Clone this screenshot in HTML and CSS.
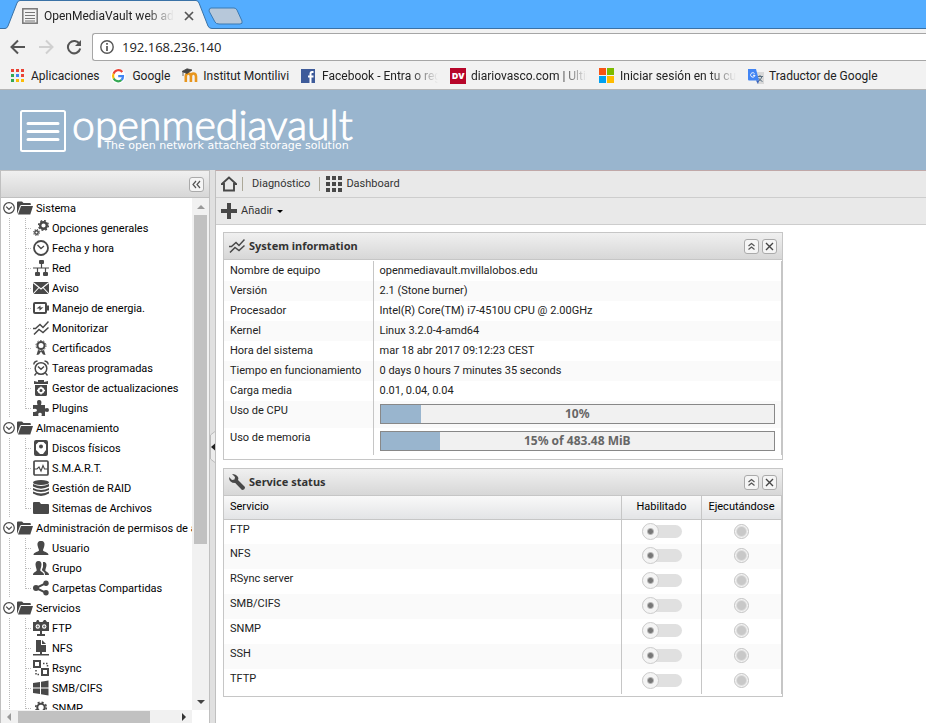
FILE: index.html
```html
<!DOCTYPE html>
<html lang="es">
<head>
<meta charset="utf-8">
<title>OpenMediaVault web administration</title>
<link rel="stylesheet" href="styles.css">
</head>
<body>
<svg class="sprite" aria-hidden="true">
  <symbol id="elbow" viewBox="0 0 32 20"><path d="M9.500 0V20M25.500 0V20M26 10.500H32" fill="none" stroke="#bbb" stroke-dasharray="1 1"/></symbol>
  <symbol id="elbow-end" viewBox="0 0 32 20"><path d="M9.500 0V20M25.500 0V11M26 10.500H32" fill="none" stroke="#bbb" stroke-dasharray="1 1"/></symbol>
  <symbol id="expand" viewBox="0 0 12 12"><circle cx="6" cy="6" r="5.300" fill="#fff" stroke="#484848" stroke-width="1.200"/><path d="M3.200 4.600 6 7.400 8.800 4.600" fill="none" stroke="#484848" stroke-width="1.300"/></symbol>
  <symbol id="folder-open" viewBox="0 0 16 16"><path d="M0 14V2.500Q0 1.500 1 1.500H5L6.500 3H13Q13.800 3 13.800 4V5H4.500Q3.500 5 3 6Z"/><path d="M4 6H16L13.300 14.500H1Z"/></symbol>
  <symbol id="folder" viewBox="0 0 16 16"><path d="M0 4V13Q0 14 1 14H15Q16 14 16 13V5Q16 4 15 4H8L6.500 2H1Q0 2 0 3Z"/></symbol>
  <symbol id="gears" viewBox="0 0 16 16"><circle cx="10.500" cy="5.500" r="3.300" fill="none" stroke="currentColor" stroke-width="2.400"/><circle cx="10.500" cy="5.500" r="4.900" fill="none" stroke="currentColor" stroke-width="1.400" stroke-dasharray="1.900 1.950"/><circle cx="3.500" cy="12.500" r="1.700" fill="none" stroke="currentColor" stroke-width="1.400"/><circle cx="3.500" cy="12.500" r="2.800" fill="none" stroke="currentColor" stroke-width="1.200" stroke-dasharray="1.100 1.100"/></symbol>
  <symbol id="clock" viewBox="0 0 16 16"><circle cx="8" cy="8" r="7" fill="none" stroke="currentColor" stroke-width="1.800"/><path d="M4.500 5 8 8.500 11 6" fill="none" stroke="currentColor" stroke-width="1.300"/></symbol>
  <symbol id="network" viewBox="0 0 16 16"><rect x="6" y="0" width="5" height="4" rx="1"/><rect x="2" y="12" width="5" height="4" rx="1"/><rect x="10" y="12" width="5" height="4" rx="1"/><path d="M8.500 3V8M0 8H16M4.500 8V13M12.500 8V13" fill="none" stroke="currentColor" stroke-width="1.200"/></symbol>
  <symbol id="mail" viewBox="0 0 16 16"><path d="M0 2H16V14H0Z"/><path d="M0 2.500 8 9 16 2.500M0 14 6 7.500M16 14 10 7.500" fill="none" stroke="#fff" stroke-width="1.100"/></symbol>
  <symbol id="battery" viewBox="0 0 16 16"><rect x="1" y="3" width="12" height="10" rx="1" fill="none" stroke="currentColor" stroke-width="2"/><path d="M14 5.500h2v5h-2z"/><path d="M3.500 8.500 7.500 5.500V7.500L10.500 7.300 6.500 10.800V8.500Z"/></symbol>
  <symbol id="chart" viewBox="0 0 16 16"><path d="M0 8.500H2.500L7 4.500 10 7.500 15.500 1.500M1 14.500 6 9.500 10 12.500 15.500 7.500" fill="none" stroke="currentColor" stroke-width="1.500"/></symbol>
  <symbol id="badge" viewBox="0 0 16 16"><circle cx="8" cy="5.500" r="3.500" fill="none" stroke="currentColor" stroke-width="2"/><circle cx="8" cy="5.500" r="5" fill="none" stroke="currentColor" stroke-dasharray="1.600 1.540"/><path d="M5 10 3.500 15 6 14.500 8 11.500 10 14.500 12.500 15 11 10 8 11Z"/></symbol>
  <symbol id="alarm" viewBox="0 0 16 16"><circle cx="8" cy="8.500" r="5.800" fill="none" stroke="currentColor" stroke-width="1.500"/><path d="M5 6.500 8 9.300 11 6.500M.8 4.500Q1 1.500 4.500 1M15.200 4.500Q15 1.500 11.500 1M3.500 13 1.500 15.500M12.500 13 14.500 15.500" fill="none" stroke="currentColor" stroke-width="1.400"/></symbol>
  <symbol id="package" viewBox="0 0 16 16"><path d="M1 1 5 2V0H11V2L15 1V4H1ZM2 5H14V14.500Q14 16 12.500 16H3.500Q2 16 2 14.500Z"/><circle cx="8" cy="10.500" r="2.400" fill="none" stroke="#fff" stroke-width="1.700"/><path d="M8 6.500V8M8 13V14.500M4 10.500H5.500M10.500 10.500H12" stroke="#fff" stroke-width="1.300"/></symbol>
  <symbol id="puzzle" viewBox="0 0 16 16"><path d="M0 5H4.500Q3 0 6 0 9.500 0 8 5H12V8.500Q16 7.200 16 10 16 12.800 12 11.500V16H8.500Q9.500 12.800 7 12.800 4.500 12.800 5.500 16H0V12Q4 12.500 4 10.300 4 8 0 9Z"/></symbol>
  <symbol id="disk" viewBox="0 0 16 16"><rect x="2" y="1" width="12" height="14" rx="1" fill="none" stroke="currentColor" stroke-width="2"/><circle cx="8" cy="6.500" r="2"/><path d="M3 10 7 14H3ZM13 10 10 14H13ZM3 2H5.500L3 4.500ZM13 2H10.500L13 4.500Z"/></symbol>
  <symbol id="smart" viewBox="0 0 16 16"><rect x="1" y="1" width="14" height="14" rx="1" fill="none" stroke="currentColor" stroke-width="1.700"/><path d="M1 9H4L6 7 8 11 10 5.500 11.500 9H15" fill="none" stroke="currentColor" stroke-width="1.100"/></symbol>
  <symbol id="raid" viewBox="0 0 16 16"><ellipse cx="8" cy="2.500" rx="8" ry="2.500"/><path d="M0 4Q8 7.800 16 4V6.500Q8 10.800 0 6.500ZM0 8Q8 12 16 8V10Q8 14 0 10ZM0 11.500Q8 15.300 16 11.500V13.500Q8 18.300 0 13.500Z"/></symbol>
  <symbol id="user" viewBox="0 0 16 16"><path d="M8 1C11 1 12 3 11.300 6 11 8 10 9 10 10.500 11 12 15.500 12 15.500 15H.5C.5 12 5 12 6 10.500 6 9 5 8 4.700 6 4 3 5 1 8 1Z"/></symbol>
  <symbol id="group" viewBox="0 0 16 16"><path d="M5.500 1C8 1 9 3 8.300 6 8 8 7.300 9 7.300 10.500 8 12 11 12 11 15H0C0 12 3 12 3.700 10.500 3.700 9 3 8 2.700 6 2 3 3 1 5.500 1ZM10 2C13 1.500 14 4 13.300 6.500 13 8 12.300 9.500 12.300 10.500 13 12 16 12 16 15H12C12 12.500 11 11.500 9.500 11L9 9.500 10 7Z"/></symbol>
  <symbol id="share" viewBox="0 0 16 16"><circle cx="3" cy="8" r="3"/><circle cx="13" cy="3.200" r="2.700"/><circle cx="13" cy="12.800" r="2.700"/><path d="M13 3.200 3 8 13 12.800" fill="none" stroke="currentColor" stroke-width="2"/></symbol>
  <symbol id="ftp" viewBox="0 0 16 16"><path d="M0 2H3L4 0H5.500L6.500 2H9.500L11 0H12.500L14 2H16V11H0Z"/><path d="M7 11h2v3h-2zM4 14h8v2H4z"/><circle cx="4.800" cy="6.500" r="2.200" fill="#fff"/><circle cx="11.200" cy="6.500" r="2.200" fill="#fff"/><path d="M4.800 5v3M3.500 6.500H6M11.200 5v3M10 6.500H12.500" stroke="currentColor" stroke-width=".6"/></symbol>
  <symbol id="nfs" viewBox="0 0 16 16"><path d="M3 0H8V5H13V12H3Z"/><path d="M9 0 13 4H9ZM7 12h2v2H7zM0 14h16v1.500H0z"/></symbol>
  <symbol id="rsync" viewBox="0 0 16 16"><path d="M1 1h6v6H1zM9 9h6v6H9z" fill="none" stroke="currentColor" stroke-width="2"/><path d="M10 3.500H14.500V7M3 10V14.500H7" fill="none" stroke="currentColor" stroke-width="1.500" stroke-dasharray="1.500 1.500"/></symbol>
  <symbol id="windows" viewBox="0 0 16 16"><path d="M0 3 7 2V7.500H0ZM8 1.800 15.500.5V7.500H8ZM0 8.500H7V14L0 13ZM8 8.500H15.500V15.500L8 14.200Z"/></symbol>
  <symbol id="gear" viewBox="0 0 16 16"><circle cx="8" cy="7.500" r="3.700" fill="none" stroke="currentColor" stroke-width="2"/><circle cx="8" cy="7.500" r="5.300" fill="none" stroke="currentColor" stroke-width="1.600" stroke-dasharray="2.100 2.060"/></symbol>
  <symbol id="wrench" viewBox="0 0 16 16"><path d="M0 3 3 6 5.500 5.500 6 3 3 0Q7 0 9 3 9.800 4.500 9 6L16 13Q16 16 13 16L6.200 9Q0 9 0 3Z"/></symbol>
  <symbol id="up2" viewBox="0 0 13 13"><path d="M3.500 6 6.500 3.500 9.500 6M3.500 9.500 6.500 7 9.500 9.500" fill="none" stroke="#555" stroke-width="1.200"/></symbol>
  <symbol id="left2" viewBox="0 0 13 13"><path d="M6 3 3 6.500 6 10M10 3 7 6.500 10 10" fill="none" stroke="#555" stroke-width="1.200"/></symbol>
  <symbol id="cross" viewBox="0 0 13 13"><path d="M3 3 10 10M10 3 3 10" stroke="#444" stroke-width="1.400"/></symbol>
</svg>

<div class="tabstrip">
  <div class="tab">
    <svg class="tab-shape" viewBox="0 0 246 29" aria-hidden="true">
      <path d="M209 11Q209 8 211 8H234Q236 8 237 10L242 21Q243 24 240 24H219Q216 24 215 22Z" fill="#b7c8da" stroke="#3b7ab3"/>
      <path d="M0 28.500H5Q7 28.500 8 26L17 3Q18 .5 20 .5H196Q198 .5 199 3L208 26Q209 28.500 212 28.500H246V29H0Z" fill="#f2f2f2"/>
      <path d="M0 28.500H5Q7 28.500 8 26L17 3Q18 .5 20 .5H196Q198 .5 199 3L208 26Q209 28.500 212 28.500H246" fill="none" stroke="#3a72a6"/>
    </svg>
    <div class="tab-content">
      <svg width="16" height="16" viewBox="0 0 16 16" aria-hidden="true"><rect x=".8" y=".8" width="14.400" height="14.400" fill="#f2f2f2" stroke="#777" stroke-width="1.500"/><path d="M3 4.500H13M3 7.500H13M3 10.500H13M3 13H13" stroke="#777"/></svg>
      <span class="tab-title fade">OpenMediaVault web adm</span>
      <button class="tab-close" aria-label="Cerrar pestaña"><svg width="10" height="10" viewBox="0 0 10 10"><path d="M1 1 9 9M9 1 1 9" stroke="#555" stroke-width="1.700"/></svg></button>
    </div>
  </div>
</div>

<div class="navbar">
  <button aria-label="Atrás"><svg width="16" height="16" viewBox="0 0 16 16"><path d="M15 8H2M8 1.500 1.500 8 8 14.500" fill="none" stroke="#555" stroke-width="2"/></svg></button>
  <button aria-label="Adelante"><svg width="16" height="16" viewBox="0 0 16 16"><path d="M1 8H14M8 1.500 14.500 8 8 14.500" fill="none" stroke="#d0d0d0" stroke-width="2"/></svg></button>
  <button aria-label="Recargar"><svg width="16" height="16" viewBox="0 0 16 16"><path d="M13.500 5A6.200 6.200 0 1 0 14.200 9.500" fill="none" stroke="#555" stroke-width="2"/><path d="M15 1V7H9Z" fill="#555"/></svg></button>
  <div class="omnibox">
    <svg width="14" height="14" viewBox="0 0 14 14" aria-hidden="true"><circle cx="7" cy="7" r="6.200" fill="none" stroke="#555" stroke-width="1.400"/><path d="M7 3V4.800M7 6V11" stroke="#555" stroke-width="1.700"/></svg>
    <input type="text" value="192.168.236.140" aria-label="Dirección">
  </div>
</div>

<nav class="bookmarks">
  <a href="#"><svg width="16" height="16" viewBox="0 0 16 16"><path d="M1 1h3v3H1zM6 1h3v3H6zM11 1h3v3h-3z" fill="#ea4335"/><path d="M1 6h3v3H1z" fill="#34a853"/><path d="M6 6h3v3H6z" fill="#4285f4"/><path d="M11 6h3v3h-3z" fill="#ea4335"/><path d="M1 11h3v3H1z" fill="#34a853"/><path d="M6 11h3v3H6zM11 11h3v3h-3z" fill="#fbbc05"/></svg><span>Aplicaciones</span></a>
  <a href="#"><svg width="16" height="16" viewBox="0 0 16 16"><circle cx="7" cy="8" r="7.500" fill="#fff"/><path d="M11.300 4A5 5 0 0 0 2.600 5.800" fill="none" stroke="#ea4335" stroke-width="2.200"/><path d="M2.600 5.800A5 5 0 0 0 2.700 10.500" fill="none" stroke="#fbbc05" stroke-width="2.200"/><path d="M2.700 10.500A5 5 0 0 0 10.500 12" fill="none" stroke="#34a853" stroke-width="2.200"/><path d="M10.500 12A5 5 0 0 0 12 8.200H7.200" fill="none" stroke="#4285f4" stroke-width="2.200"/></svg><span>Google</span></a>
  <a href="#"><svg width="16" height="16" viewBox="0 0 16 16"><path d="M3.800 14V8.500Q3.800 5.500 6.300 5.500T8.900 8.500V14M8.900 8.500Q8.900 5.500 11.400 5.500T14 8.500V14" fill="none" stroke="#e8961e" stroke-width="2.600"/><path d="M0 3.500 5 .8 10 2 5 5.500ZM1 4V8" fill="#444" stroke="#444" stroke-width=".8"/></svg><span>Institut Montilivi</span></a>
  <a href="#"><svg width="16" height="16" viewBox="0 0 16 16"><path d="M0 1h14v14H0z" fill="#3e5b9a"/><path d="M9.500 15V9.500M12.500 4H11Q9.500 4 9.500 6V9.500M7 8.500H12.500" fill="none" stroke="#fff" stroke-width="2"/></svg><span class="fade">Facebook - Entra o reg</span></a>
  <a href="#"><span class="dv">DV</span><span class="fade">diariovasco.com | Ultim</span></a>
  <a href="#"><svg width="16" height="16" viewBox="0 0 16 16"><path d="M0 0h7v7H0z" fill="#f65314"/><path d="M8 0h7v7H8z" fill="#7cbb00"/><path d="M0 8h7v7H0z" fill="#00a1f1"/><path d="M8 8h7v7H8z" fill="#ffbb00"/></svg><span class="fade">Iniciar sesión en tu cue</span></a>
  <a href="#"><svg width="16" height="16" viewBox="0 0 16 16"><path d="M7 4H16V16H9Z" fill="#d8d8d8"/><path d="M9.500 8.500H15M12 7V8.500M14 8.500Q13 12 10 13.500M10.500 10Q12 12.500 14.500 13.500" fill="none" stroke="#5a7080"/><path d="M0 1H8L11 12.500H1Q0 12.500 0 11.500Z" fill="#4285f4"/><path d="M8 12.500H11L10 16Z" fill="#3360c0"/><path d="M6.500 5.500A2.200 2.200 0 1 0 7 7.300H5" fill="none" stroke="#fff"/></svg><span>Traductor de Google</span></a>
</nav>

<header class="banner">
  <svg width="46" height="42" viewBox="0 0 46 42" aria-hidden="true"><rect x="1" y="1" width="44" height="40" rx="1.500" fill="none" stroke="#fff" stroke-width="2"/><path d="M8 13.500H38M8 21.500H38M8 29.500H38" stroke="#fff" stroke-width="3" stroke-linecap="round"/></svg>
  <div class="brand"><span class="brand-name">openmediavault</span><span class="brand-sub">The open network attached storage solution</span></div>
</header>

<div class="workspace">
  <aside class="sidebar">
    <div class="sidebar-head"><button class="tool" aria-label="Contraer"><svg><use href="#left2"/></svg></button></div>
    <div class="tree-wrap">
      <ul class="tree">
        <li><a href="#"><svg class="exp"><use href="#expand"/></svg><svg class="ico"><use href="#folder-open"/></svg><span>Sistema</span></a></li>
        <li><a href="#"><svg class="elb"><use href="#elbow"/></svg><svg class="ico"><use href="#gears"/></svg><span>Opciones generales</span></a></li>
        <li><a href="#"><svg class="elb"><use href="#elbow"/></svg><svg class="ico"><use href="#clock"/></svg><span>Fecha y hora</span></a></li>
        <li><a href="#"><svg class="elb"><use href="#elbow"/></svg><svg class="ico"><use href="#network"/></svg><span>Red</span></a></li>
        <li><a href="#"><svg class="elb"><use href="#elbow"/></svg><svg class="ico"><use href="#mail"/></svg><span>Aviso</span></a></li>
        <li><a href="#"><svg class="elb"><use href="#elbow"/></svg><svg class="ico"><use href="#battery"/></svg><span>Manejo de energia.</span></a></li>
        <li><a href="#"><svg class="elb"><use href="#elbow"/></svg><svg class="ico"><use href="#chart"/></svg><span>Monitorizar</span></a></li>
        <li><a href="#"><svg class="elb"><use href="#elbow"/></svg><svg class="ico"><use href="#badge"/></svg><span>Certificados</span></a></li>
        <li><a href="#"><svg class="elb"><use href="#elbow"/></svg><svg class="ico"><use href="#alarm"/></svg><span>Tareas programadas</span></a></li>
        <li><a href="#"><svg class="elb"><use href="#elbow"/></svg><svg class="ico"><use href="#package"/></svg><span>Gestor de actualizaciones</span></a></li>
        <li><a href="#"><svg class="elb"><use href="#elbow-end"/></svg><svg class="ico"><use href="#puzzle"/></svg><span>Plugins</span></a></li>
        <li><a href="#"><svg class="exp"><use href="#expand"/></svg><svg class="ico"><use href="#folder-open"/></svg><span>Almacenamiento</span></a></li>
        <li><a href="#"><svg class="elb"><use href="#elbow"/></svg><svg class="ico"><use href="#disk"/></svg><span>Discos físicos</span></a></li>
        <li><a href="#"><svg class="elb"><use href="#elbow"/></svg><svg class="ico"><use href="#smart"/></svg><span>S.M.A.R.T.</span></a></li>
        <li><a href="#"><svg class="elb"><use href="#elbow"/></svg><svg class="ico"><use href="#raid"/></svg><span>Gestión de RAID</span></a></li>
        <li><a href="#"><svg class="elb"><use href="#elbow-end"/></svg><svg class="ico"><use href="#folder"/></svg><span>Sitemas de Archivos</span></a></li>
        <li><a href="#"><svg class="exp"><use href="#expand"/></svg><svg class="ico"><use href="#folder-open"/></svg><span>Administración de permisos de acceso</span></a></li>
        <li><a href="#"><svg class="elb"><use href="#elbow"/></svg><svg class="ico"><use href="#user"/></svg><span>Usuario</span></a></li>
        <li><a href="#"><svg class="elb"><use href="#elbow"/></svg><svg class="ico"><use href="#group"/></svg><span>Grupo</span></a></li>
        <li><a href="#"><svg class="elb"><use href="#elbow-end"/></svg><svg class="ico"><use href="#share"/></svg><span>Carpetas Compartidas</span></a></li>
        <li><a href="#"><svg class="exp"><use href="#expand"/></svg><svg class="ico"><use href="#folder-open"/></svg><span>Servicios</span></a></li>
        <li><a href="#"><svg class="elb"><use href="#elbow"/></svg><svg class="ico"><use href="#ftp"/></svg><span>FTP</span></a></li>
        <li><a href="#"><svg class="elb"><use href="#elbow"/></svg><svg class="ico"><use href="#nfs"/></svg><span>NFS</span></a></li>
        <li><a href="#"><svg class="elb"><use href="#elbow"/></svg><svg class="ico"><use href="#rsync"/></svg><span>Rsync</span></a></li>
        <li><a href="#"><svg class="elb"><use href="#elbow"/></svg><svg class="ico"><use href="#windows"/></svg><span>SMB/CIFS</span></a></li>
        <li><a href="#"><svg class="elb"><use href="#elbow"/></svg><svg class="ico"><use href="#gear"/></svg><span>SNMP</span></a></li>
      </ul>
      <div class="vscroll"><i class="arrow up"></i><i class="vthumb"></i><i class="arrow down"></i></div>
      <div class="hscroll"><i class="arrow left"></i><i class="hthumb"></i><i class="arrow right"></i></div>
    </div>
  </aside>
  <button class="splitter" aria-label="Contraer panel"><svg width="5" height="32" viewBox="0 0 5 32"><path d="M5 .5 .5 4V28L5 31.500" fill="#ececec" stroke="#bbb"/><path d="M5 12.500V19.500L1 16Z" fill="#222"/></svg></button>

  <main class="main">
    <nav class="bar">
      <a href="#" aria-label="Inicio"><svg class="ico" viewBox="0 0 16 16"><path d="M8 1.500 .8 8H3V14.500H13V8H15.200Z" fill="none" stroke="currentColor" stroke-width="1.900"/></svg></a>
      <a class="crumb" href="#">Diagnóstico</a>
      <a class="crumb-last" href="#"><svg class="ico" viewBox="0 0 16 16"><path d="M0 0h4v4H0zM6 0h4v4H6zM12 0h4v4h-4zM0 6h4v4H0zM6 6h4v4H6zM12 6h4v4h-4zM0 12h4v4H0zM6 12h4v4H6zM12 12h4v4h-4z"/></svg>Dashboard</a>
    </nav>
    <div class="bar">
      <button class="add"><svg class="ico" viewBox="0 0 16 16"><path d="M6 0h4v6h6v4h-6v6H6v-6H0V6h6z"/></svg>Añadir<i class="caret"></i></button>
    </div>
    <div class="dashboard">
      <section class="panel">
        <h2 class="panel-head"><svg class="ico"><use href="#chart"/></svg><span>System information</span><button class="tool" aria-label="Plegar"><svg><use href="#up2"/></svg></button><button class="tool" aria-label="Cerrar"><svg><use href="#cross"/></svg></button></h2>
        <table class="info">
          <tr><th>Nombre de equipo</th><td>openmediavault.mvillalobos.edu</td></tr>
          <tr><th>Versión</th><td>2.1 (Stone burner)</td></tr>
          <tr><th>Procesador</th><td>Intel(R) Core(TM) i7-4510U CPU @ 2.00GHz</td></tr>
          <tr><th>Kernel</th><td>Linux 3.2.0-4-amd64</td></tr>
          <tr><th>Hora del sistema</th><td>mar 18 abr 2017 09:12:23 CEST</td></tr>
          <tr><th>Tiempo en funcionamiento</th><td>0 days 0 hours 7 minutes 35 seconds</td></tr>
          <tr><th>Carga media</th><td>0.01, 0.04, 0.04</td></tr>
          <tr class="usage"><th>Uso de CPU</th><td><div class="meter"><i style="width:10.300%"></i><b>10%</b></div></td></tr>
          <tr class="usage"><th>Uso de memoria</th><td><div class="meter"><i style="width:15%"></i><b>15% of 483.48 MiB</b></div></td></tr>
        </table>
      </section>
      <section class="panel">
        <h2 class="panel-head"><svg class="ico"><use href="#wrench"/></svg><span>Service status</span><button class="tool" aria-label="Plegar"><svg><use href="#up2"/></svg></button><button class="tool" aria-label="Cerrar"><svg><use href="#cross"/></svg></button></h2>
        <table class="services">
          <thead><tr><th>Servicio</th><th>Habilitado</th><th>Ejecutándose</th></tr></thead>
          <tbody>
            <tr><td>FTP</td><td><input type="checkbox" class="switch" aria-label="FTP"></td><td><i class="led"></i></td></tr>
            <tr><td>NFS</td><td><input type="checkbox" class="switch" aria-label="NFS"></td><td><i class="led"></i></td></tr>
            <tr><td>RSync server</td><td><input type="checkbox" class="switch" aria-label="RSync server"></td><td><i class="led"></i></td></tr>
            <tr><td>SMB/CIFS</td><td><input type="checkbox" class="switch" aria-label="SMB/CIFS"></td><td><i class="led"></i></td></tr>
            <tr><td>SNMP</td><td><input type="checkbox" class="switch" aria-label="SNMP"></td><td><i class="led"></i></td></tr>
            <tr><td>SSH</td><td><input type="checkbox" class="switch" aria-label="SSH"></td><td><i class="led"></i></td></tr>
            <tr><td>TFTP</td><td><input type="checkbox" class="switch" aria-label="TFTP"></td><td><i class="led"></i></td></tr>
          </tbody>
        </table>
      </section>
    </div>
  </main>
</div>
</body>
</html>
```
FILE: styles.css
```css
* { box-sizing: border-box; }
body {
  margin: 0;
  height: 100vh;
  display: flex;
  flex-direction: column;
  overflow: hidden;
  background: #fff;
  color: #000;
  font: 11px/20px Roboto, "Noto Sans", sans-serif;
}
a { color: inherit; text-decoration: none; }
button { padding: 0; border: 0; background: none; font: inherit; color: inherit; display: flex; align-items: center; }
svg { flex: none; display: block; }
.sprite { position: absolute; width: 0; height: 0; }
.ico { width: 16px; height: 16px; color: #484848; fill: currentColor; }
.fade {
  overflow: hidden;
  white-space: nowrap;
  -webkit-mask-image: linear-gradient(to left, transparent, #000 28px);
  mask-image: linear-gradient(to left, transparent, #000 28px);
}

/* Browser frame */
.tabstrip { background: #54adff; border-bottom: 1px solid #3a72a6; height: 29px; }
.tab { display: grid; grid-template-columns: 246px; width: 246px; height: 29px; }
.tab > * { grid-area: 1 / 1; }
.tab-shape { width: 246px; height: 29px; }
.tab-content { display: flex; align-items: center; gap: 6px; min-width: 0; padding: 2px 52px 0 22px; font: 12px/16px Roboto, sans-serif; color: #222; }
.tab-title { flex: 1; min-width: 0; }
.tab-close { margin-left: 4px; }
.navbar { display: flex; align-items: center; gap: 12px; height: 33px; padding: 3px 0 0 10px; background: #f2f2f2; }
.omnibox { flex: 1; display: flex; align-items: center; gap: 8px; height: 28px; margin-left: -2px; padding-left: 7px; background: #fff; border: 1px solid #a6a6a6; border-right: 0; border-radius: 3px 0 0 3px; }
.omnibox input { flex: 1; border: 0; padding: 0; outline: 0; background: none; font: 13px/20px "Open Sans", sans-serif; color: #222; }
.bookmarks { display: flex; gap: 12px; height: 28px; padding: 0 10px; align-items: center; background: #f2f2f2; border-bottom: 1px solid #b6b6b6; font: 12px/16px Roboto, sans-serif; color: #222; white-space: nowrap; }
.bookmarks a { display: flex; align-items: center; gap: 5px; }
.bookmarks .fade { width: 116px; }
.dv { width: 16px; height: 16px; background: #b7062a; color: #fff; font: 800 9px/16px "Open Sans", sans-serif; text-align: center; }

.banner { display: flex; align-items: flex-start; gap: 6px; height: 80px; padding: 20px 20px 0; background: #99b5ce; color: #fff; }
.brand { display: flex; flex-direction: column; }
.brand-name { font: 300 41px/30px Lato, sans-serif; -webkit-text-stroke: 1px #fff; }
.brand-sub { align-self: flex-end; padding-right: 4px; font: 11px/12px "DejaVu Sans", sans-serif; }

/* Application */
.workspace { flex: 1; min-height: 0; display: flex; background: #e0e0e0; }
.sidebar { width: 210px; display: flex; flex-direction: column; border: 1px solid #c0c0c0; border-bottom: 0; background: #fff; }
.sidebar-head { display: flex; align-items: center; justify-content: flex-end; height: 27px; padding-right: 5px; background: linear-gradient(#f0f0f0, #d7d7d7); border-bottom: 1px solid #c0c0c0; }
.tool { width: 15px; height: 15px; border: 1px solid #aaa; border-radius: 3px; background: #f5f5f5; }
.tool svg { width: 13px; height: 13px; }
.tree-wrap { flex: 1; min-height: 0; display: grid; grid-template: minmax(0, 1fr) 13px / minmax(0, 1fr) 17px; }
.tree { list-style: none; margin: 0; padding: 0; overflow: hidden; white-space: nowrap; }
.tree a { display: flex; align-items: center; gap: 3px; height: 20px; }
.tree span { padding-top: 2px; }
.elb { width: 32px; height: 20px; margin: 0 -3px 0 -1px; }
.elb + .ico { margin-left: 1px; }
.exp { width: 12px; height: 12px; margin: 0 -1px 0 2px; }
.vscroll { display: flex; flex-direction: column; align-items: center; gap: 6px; padding: 7px 0 6px; background: #f1f1f1; }
.vthumb { width: 13px; flex: 0 0 66%; background: #c1c1c1; }
.hscroll { display: flex; align-items: center; padding: 0 6px; background: #f1f1f1; }
.hthumb { flex: 0 0 132px; height: 12px; margin-left: 7px; background: #c1c1c1; }
.arrow { border: 4px solid transparent; }
.up { border-top: 0; border-bottom-color: #999; }
.down { border-bottom: 0; border-top-color: #444; margin-top: auto; }
.left { border-left: 0; border-right-color: #999; }
.right { border-right: 0; border-left-color: #333; margin-left: auto; }
.splitter { width: 5px; }

.main { flex: 1; min-width: 0; background: #fff; border-left: 1px solid #c0c0c0; border-top: 1px solid #c0a8a8; }
.bar { display: flex; align-items: center; height: 27px; padding-left: 5px; background: #e9e9e9; border-bottom: 1px solid #cdcdcd; color: #333; }
.crumb { margin-left: 5px; padding: 0 9px; line-height: 14px; border-left: 1px solid #aca899; border-right: 1px solid #aca899; }
.crumb-last, .add { display: flex; align-items: center; gap: 4px; }
.crumb-last { margin-left: 6px; }
.caret { border: 3px solid transparent; border-top-color: #000; border-bottom: 0; }
.dashboard { display: flex; flex-direction: column; gap: 8px; max-width: 574px; padding: 7px; }
.panel { border: 1px solid #c6c6c6; }
.panel-head { display: flex; align-items: center; gap: 3px; height: 27px; margin: 0; padding: 0 5px; background: linear-gradient(#f0f0f0, #d7d7d7); font: bold 11px/16px "Noto Sans", sans-serif; color: #333; border-bottom: 1px solid #c6c6c6; }
.panel-head span { flex: 1; margin-left: 1px; }
table { width: 100%; border-collapse: collapse; table-layout: fixed; border-right: 1px solid #c6c6c6; }
th, td { padding: 0 6px; text-align: left; font-weight: normal; vertical-align: top; color: #222; }
.info { margin: 1px 0 4px; }
.info th { width: 149px; padding-right: 0; white-space: nowrap; border-right: 1px solid #c6c6c6; }
.info tr:nth-child(even), .services tbody tr:nth-child(even) { background: #fafafa; }
.info .usage { height: 27px; }
.meter { display: grid; height: 20px; margin-top: 3px; border: 1px solid #888; background: #f1f1f1; }
.meter > * { grid-area: 1 / 1; }
.meter i { background: #99b5ce; }
.meter b { text-align: center; font: bold 12px/18px "Noto Sans", sans-serif; color: #666; }
.services { margin-bottom: 2px; }
.services th { height: 23px; line-height: 22px; background: linear-gradient(#f9f9f9, #e3e4e6); border-bottom: 1px solid #c6c6c6; color: #000; }
.services th + th, .services td + td { width: 80px; padding: 0; text-align: center; border-left: 1px solid #c6c6c6; }
.services tbody tr { height: 25px; }
.switch { appearance: none; display: flex; align-items: center; width: 40px; height: 13px; margin: 5px auto 0; border-radius: 7px; background: #e0e0e0; }
.switch::before { content: ""; width: 15px; height: 15px; border: 1px solid #ccc; border-radius: 50%; background: radial-gradient(circle, #777 0 2px, #f4f4f4 4px); flex: none; }
.led { display: block; width: 15px; height: 15px; margin: 4px auto 0; border: 1px solid #c4c4c4; border-radius: 50%; background: radial-gradient(circle, #c8c8c8 0 4px, #f4f4f4 6px); }
```
